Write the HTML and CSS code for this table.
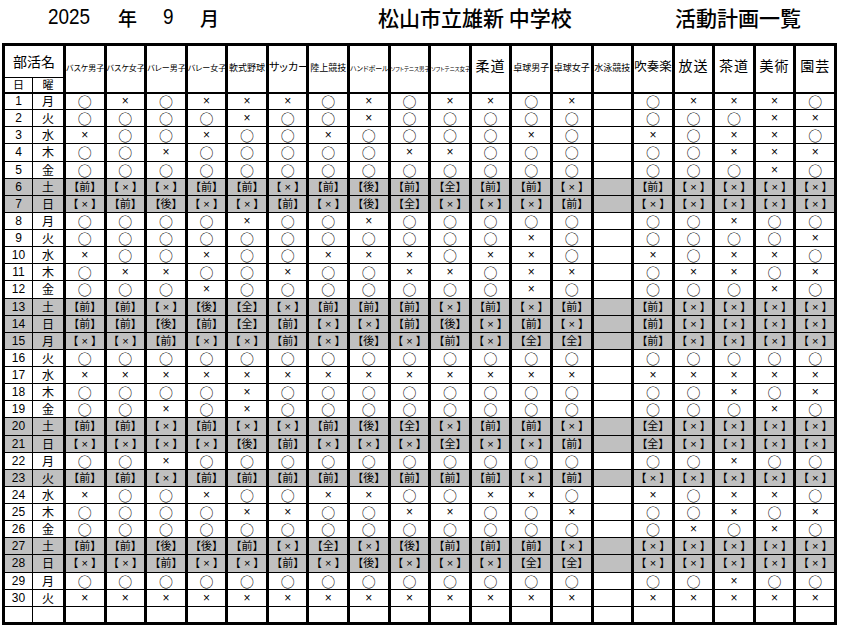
FILE: index.html
```html
<!DOCTYPE html>
<html lang="ja">
<head>
<meta charset="utf-8">
<title>活動計画一覧</title>
<link rel="stylesheet" href="styles.css">
</head>
<body>
<div class="title">
  <span class="t-year"><span class="num">2025</span></span>
  <span class="t-nen">年</span>
  <span class="t-m"><span class="num">9</span></span>
  <span class="t-tsuki">月</span>
  <span class="t-school">松山市立雄新 中学校</span>
  <span class="t-doc">活動計画一覧</span>
</div>
<table class="plan">
<colgroup><col class="cd"><col class="cw"><col span="19"></colgroup>
<thead>
<tr class="h1">
  <th colspan="2" class="bk">部活名</th>
  <th rowspan="2"><span class="l s8">バスケ男子</span></th>
  <th rowspan="2"><span class="l s8">バスケ女子</span></th>
  <th rowspan="2"><span class="l s8">バレー男子</span></th>
  <th rowspan="2"><span class="l s8">バレー女子</span></th>
  <th rowspan="2"><span class="l s9">軟式野球</span></th>
  <th rowspan="2"><span class="l s11">サッカー</span></th>
  <th rowspan="2"><span class="l s9">陸上競技</span></th>
  <th rowspan="2"><span class="l s7">ハンドボール</span></th>
  <th rowspan="2"><span class="l s5">ソフトテニス男子</span></th>
  <th rowspan="2"><span class="l s5">ソフトテニス女子</span></th>
  <th rowspan="2"><span class="l s14">柔道</span></th>
  <th rowspan="2"><span class="l s9">卓球男子</span></th>
  <th rowspan="2"><span class="l s9">卓球女子</span></th>
  <th rowspan="2"><span class="l s9">水泳競技</span></th>
  <th rowspan="2"><span class="l s12">吹奏楽</span></th>
  <th rowspan="2"><span class="l s14">放送</span></th>
  <th rowspan="2"><span class="l s14">茶道</span></th>
  <th rowspan="2"><span class="l s14">美術</span></th>
  <th rowspan="2"><span class="l s14">園芸</span></th>
</tr>
<tr class="h2"><th class="d">日</th><th class="w">曜</th></tr>
</thead>
<tbody>
<tr><td class="d">1</td><td class="w">月</td><td>○</td><td class="x">×</td><td>○</td><td class="x">×</td><td class="x">×</td><td class="x">×</td><td>○</td><td class="x">×</td><td>○</td><td class="x">×</td><td class="x">×</td><td>○</td><td class="x">×</td><td></td><td>○</td><td class="x">×</td><td class="x">×</td><td class="x">×</td><td>○</td></tr>
<tr><td class="d">2</td><td class="w">火</td><td>○</td><td>○</td><td>○</td><td>○</td><td class="x">×</td><td>○</td><td>○</td><td class="x">×</td><td>○</td><td>○</td><td>○</td><td>○</td><td>○</td><td></td><td>○</td><td>○</td><td>○</td><td class="x">×</td><td class="x">×</td></tr>
<tr><td class="d">3</td><td class="w">水</td><td class="x">×</td><td>○</td><td>○</td><td class="x">×</td><td>○</td><td>○</td><td class="x">×</td><td>○</td><td>○</td><td>○</td><td>○</td><td class="x">×</td><td>○</td><td></td><td class="x">×</td><td>○</td><td class="x">×</td><td class="x">×</td><td>○</td></tr>
<tr><td class="d">4</td><td class="w">木</td><td>○</td><td>○</td><td class="x">×</td><td>○</td><td>○</td><td>○</td><td>○</td><td>○</td><td class="x">×</td><td class="x">×</td><td>○</td><td>○</td><td>○</td><td></td><td>○</td><td>○</td><td class="x">×</td><td class="x">×</td><td class="x">×</td></tr>
<tr><td class="d">5</td><td class="w">金</td><td>○</td><td>○</td><td>○</td><td>○</td><td>○</td><td>○</td><td>○</td><td>○</td><td>○</td><td>○</td><td>○</td><td>○</td><td>○</td><td></td><td>○</td><td>○</td><td>○</td><td class="x">×</td><td>○</td></tr>
<tr class="we"><td class="d">6</td><td class="w">土</td><td>【前】</td><td>【 × 】</td><td>【 × 】</td><td>【前】</td><td>【前】</td><td>【 × 】</td><td>【前】</td><td>【後】</td><td>【前】</td><td>【全】</td><td>【前】</td><td>【前】</td><td>【 × 】</td><td></td><td>【前】</td><td>【 × 】</td><td>【 × 】</td><td>【 × 】</td><td>【 × 】</td></tr>
<tr class="we"><td class="d">7</td><td class="w">日</td><td>【 × 】</td><td>【前】</td><td>【後】</td><td>【 × 】</td><td>【 × 】</td><td>【前】</td><td>【 × 】</td><td>【後】</td><td>【全】</td><td>【 × 】</td><td>【 × 】</td><td>【 × 】</td><td>【前】</td><td></td><td>【 × 】</td><td>【 × 】</td><td>【 × 】</td><td>【 × 】</td><td>【 × 】</td></tr>
<tr><td class="d">8</td><td class="w">月</td><td>○</td><td>○</td><td>○</td><td>○</td><td class="x">×</td><td>○</td><td>○</td><td class="x">×</td><td>○</td><td>○</td><td>○</td><td>○</td><td>○</td><td></td><td>○</td><td>○</td><td class="x">×</td><td>○</td><td>○</td></tr>
<tr><td class="d">9</td><td class="w">火</td><td>○</td><td>○</td><td>○</td><td>○</td><td>○</td><td>○</td><td>○</td><td>○</td><td>○</td><td>○</td><td>○</td><td class="x">×</td><td>○</td><td></td><td>○</td><td>○</td><td>○</td><td>○</td><td class="x">×</td></tr>
<tr><td class="d">10</td><td class="w">水</td><td class="x">×</td><td>○</td><td>○</td><td class="x">×</td><td>○</td><td>○</td><td class="x">×</td><td class="x">×</td><td class="x">×</td><td>○</td><td class="x">×</td><td class="x">×</td><td>○</td><td></td><td class="x">×</td><td>○</td><td class="x">×</td><td class="x">×</td><td>○</td></tr>
<tr><td class="d">11</td><td class="w">木</td><td>○</td><td class="x">×</td><td class="x">×</td><td>○</td><td>○</td><td class="x">×</td><td>○</td><td>○</td><td class="x">×</td><td class="x">×</td><td>○</td><td class="x">×</td><td class="x">×</td><td></td><td>○</td><td class="x">×</td><td class="x">×</td><td>○</td><td class="x">×</td></tr>
<tr><td class="d">12</td><td class="w">金</td><td>○</td><td>○</td><td>○</td><td class="x">×</td><td>○</td><td>○</td><td>○</td><td>○</td><td>○</td><td>○</td><td>○</td><td class="x">×</td><td>○</td><td></td><td>○</td><td>○</td><td>○</td><td class="x">×</td><td>○</td></tr>
<tr class="we"><td class="d">13</td><td class="w">土</td><td>【前】</td><td>【前】</td><td>【 × 】</td><td>【後】</td><td>【全】</td><td>【 × 】</td><td>【前】</td><td>【前】</td><td>【前】</td><td>【 × 】</td><td>【前】</td><td>【 × 】</td><td>【前】</td><td></td><td>【前】</td><td>【 × 】</td><td>【 × 】</td><td>【 × 】</td><td>【 × 】</td></tr>
<tr class="we"><td class="d">14</td><td class="w">日</td><td>【前】</td><td>【前】</td><td>【後】</td><td>【前】</td><td>【全】</td><td>【前】</td><td>【 × 】</td><td>【 × 】</td><td>【前】</td><td>【後】</td><td>【 × 】</td><td>【前】</td><td>【 × 】</td><td></td><td>【前】</td><td>【 × 】</td><td>【 × 】</td><td>【 × 】</td><td>【 × 】</td></tr>
<tr class="we"><td class="d">15</td><td class="w">月</td><td>【 × 】</td><td>【 × 】</td><td>【前】</td><td>【 × 】</td><td>【 × 】</td><td>【前】</td><td>【 × 】</td><td>【後】</td><td>【 × 】</td><td>【前】</td><td>【 × 】</td><td>【全】</td><td>【全】</td><td></td><td>【前】</td><td>【 × 】</td><td>【 × 】</td><td>【 × 】</td><td>【 × 】</td></tr>
<tr><td class="d">16</td><td class="w">火</td><td>○</td><td>○</td><td>○</td><td>○</td><td>○</td><td>○</td><td>○</td><td>○</td><td>○</td><td>○</td><td>○</td><td>○</td><td>○</td><td></td><td>○</td><td>○</td><td>○</td><td>○</td><td>○</td></tr>
<tr><td class="d">17</td><td class="w">水</td><td class="x">×</td><td class="x">×</td><td class="x">×</td><td class="x">×</td><td class="x">×</td><td class="x">×</td><td class="x">×</td><td class="x">×</td><td class="x">×</td><td class="x">×</td><td class="x">×</td><td class="x">×</td><td class="x">×</td><td></td><td class="x">×</td><td class="x">×</td><td class="x">×</td><td class="x">×</td><td class="x">×</td></tr>
<tr><td class="d">18</td><td class="w">木</td><td>○</td><td>○</td><td>○</td><td>○</td><td class="x">×</td><td>○</td><td>○</td><td>○</td><td>○</td><td>○</td><td>○</td><td>○</td><td>○</td><td></td><td>○</td><td>○</td><td class="x">×</td><td>○</td><td class="x">×</td></tr>
<tr><td class="d">19</td><td class="w">金</td><td>○</td><td>○</td><td class="x">×</td><td>○</td><td class="x">×</td><td>○</td><td>○</td><td>○</td><td>○</td><td>○</td><td>○</td><td>○</td><td>○</td><td></td><td>○</td><td>○</td><td>○</td><td class="x">×</td><td>○</td></tr>
<tr class="we"><td class="d">20</td><td class="w">土</td><td>【前】</td><td>【前】</td><td>【 × 】</td><td>【前】</td><td>【 × 】</td><td>【 × 】</td><td>【前】</td><td>【後】</td><td>【全】</td><td>【 × 】</td><td>【前】</td><td>【前】</td><td>【 × 】</td><td></td><td>【全】</td><td>【 × 】</td><td>【 × 】</td><td>【 × 】</td><td>【 × 】</td></tr>
<tr class="we"><td class="d">21</td><td class="w">日</td><td>【 × 】</td><td>【 × 】</td><td>【 × 】</td><td>【 × 】</td><td>【後】</td><td>【前】</td><td>【 × 】</td><td>【 × 】</td><td>【 × 】</td><td>【全】</td><td>【 × 】</td><td>【 × 】</td><td>【前】</td><td></td><td>【全】</td><td>【 × 】</td><td>【 × 】</td><td>【 × 】</td><td>【 × 】</td></tr>
<tr><td class="d">22</td><td class="w">月</td><td>○</td><td>○</td><td class="x">×</td><td>○</td><td>○</td><td>○</td><td>○</td><td>○</td><td>○</td><td>○</td><td>○</td><td>○</td><td>○</td><td></td><td>○</td><td>○</td><td class="x">×</td><td>○</td><td>○</td></tr>
<tr class="we"><td class="d">23</td><td class="w">火</td><td>【前】</td><td>【前】</td><td>【 × 】</td><td>【前】</td><td>【前】</td><td>【前】</td><td>【前】</td><td>【後】</td><td>【前】</td><td>【前】</td><td>【前】</td><td>【 × 】</td><td>【前】</td><td></td><td>【 × 】</td><td>【 × 】</td><td>【 × 】</td><td>【 × 】</td><td>【 × 】</td></tr>
<tr><td class="d">24</td><td class="w">水</td><td class="x">×</td><td>○</td><td>○</td><td class="x">×</td><td>○</td><td>○</td><td class="x">×</td><td class="x">×</td><td>○</td><td>○</td><td class="x">×</td><td class="x">×</td><td>○</td><td></td><td class="x">×</td><td>○</td><td class="x">×</td><td class="x">×</td><td>○</td></tr>
<tr><td class="d">25</td><td class="w">木</td><td>○</td><td>○</td><td>○</td><td>○</td><td class="x">×</td><td class="x">×</td><td>○</td><td>○</td><td class="x">×</td><td class="x">×</td><td>○</td><td>○</td><td class="x">×</td><td></td><td>○</td><td>○</td><td class="x">×</td><td>○</td><td class="x">×</td></tr>
<tr><td class="d">26</td><td class="w">金</td><td>○</td><td>○</td><td>○</td><td>○</td><td>○</td><td>○</td><td>○</td><td>○</td><td>○</td><td>○</td><td>○</td><td>○</td><td>○</td><td></td><td>○</td><td class="x">×</td><td>○</td><td class="x">×</td><td>○</td></tr>
<tr class="we"><td class="d">27</td><td class="w">土</td><td>【前】</td><td>【前】</td><td>【後】</td><td>【後】</td><td>【前】</td><td>【 × 】</td><td>【全】</td><td>【 × 】</td><td>【後】</td><td>【前】</td><td>【前】</td><td>【前】</td><td>【 × 】</td><td></td><td>【 × 】</td><td>【 × 】</td><td>【 × 】</td><td>【 × 】</td><td>【 × 】</td></tr>
<tr class="we"><td class="d">28</td><td class="w">日</td><td>【 × 】</td><td>【 × 】</td><td>【前】</td><td>【 × 】</td><td>【 × 】</td><td>【前】</td><td>【 × 】</td><td>【後】</td><td>【 × 】</td><td>【 × 】</td><td>【 × 】</td><td>【全】</td><td>【全】</td><td></td><td>【 × 】</td><td>【 × 】</td><td>【 × 】</td><td>【 × 】</td><td>【 × 】</td></tr>
<tr><td class="d">29</td><td class="w">月</td><td>○</td><td>○</td><td>○</td><td>○</td><td>○</td><td>○</td><td>○</td><td>○</td><td>○</td><td>○</td><td>○</td><td>○</td><td>○</td><td></td><td>○</td><td>○</td><td class="x">×</td><td>○</td><td>○</td></tr>
<tr><td class="d">30</td><td class="w">火</td><td class="x">×</td><td class="x">×</td><td class="x">×</td><td class="x">×</td><td class="x">×</td><td class="x">×</td><td class="x">×</td><td class="x">×</td><td class="x">×</td><td class="x">×</td><td class="x">×</td><td class="x">×</td><td class="x">×</td><td></td><td class="x">×</td><td class="x">×</td><td class="x">×</td><td class="x">×</td><td class="x">×</td></tr>
<tr><td class="d"></td><td class="w"></td><td></td><td></td><td></td><td></td><td></td><td></td><td></td><td></td><td></td><td></td><td></td><td></td><td></td><td></td><td></td><td></td><td></td><td></td><td></td></tr>
</tbody>
</table>
</body>
</html>
```

FILE: styles.css
```css
html, body {
  margin: 0;
  padding: 0;
  background: #fff;
}

body {
  width: 848px;
  height: 642px;
  overflow: hidden;
  color: #000;
  font-family: "Noto Sans CJK JP", "Liberation Sans", sans-serif;
}

/* ---------- title line ---------- */
.title {
  display: flex;
  align-items: center;
  height: 34px;
  white-space: nowrap;
  font-weight: 500;
}

.num {
  display: inline-block;
  font-family: "Liberation Sans", sans-serif;
  font-size: 22px;
  transform: scaleX(0.86);
  transform-origin: left center;
}

.t-year { margin-left: 48px; width: 70px; }
.t-nen { width: 45px; font-size: 19px; }
.t-m { width: 37px; }
.t-tsuki { width: 178px; font-size: 19px; }
.t-school { width: 297px; font-size: 21px; }
.t-doc { font-size: 21px; }

/* ---------- table ---------- */
.plan {
  margin: 9px 0 0 2px;
  width: 835px;
  border-collapse: collapse;
  table-layout: fixed;
  border: 3px solid #000;
}

.cd { width: 29px; }
.cw { width: 32px; }

.plan th,
.plan td {
  padding: 0;
  border-top: 1px solid #000;
  border-bottom: 1px solid #000;
  border-left: 3px solid #000;
  border-right: 3px solid #000;
  text-align: center;
  vertical-align: middle;
  white-space: nowrap;
  font-weight: normal;
}

.plan .d { border-right-width: 1px; }
.plan .w { border-left-width: 1px; }

.h1 { height: 33px; }
.h2 { height: 15px; }

.plan thead th {
  border-bottom-width: 2px;
  overflow: hidden;
}
.plan .h1 th { padding-bottom: 10px; }
.plan .h1 th.bk {
  border-bottom-width: 1px;
  padding: 0 0 2px;
  font-size: 14px;
}
.plan .h2 th {
  font-size: 11px;
  line-height: 13px;
}

.l {
  display: inline-block;
  font-feature-settings: "palt";
  line-height: 1;
}
.s5 { font-size: 5.5px; }
.s7 { font-size: 7px; }
.s8 { font-size: 8px; }
.s9 { font-size: 9px; }
.s11 { font-size: 11px; }
.s12 { font-size: 12.5px; }
.s14 { font-size: 14px; letter-spacing: 1px; }

.plan tbody tr { height: 17.13px; }

.plan tbody td {
  font-size: 14px;
  line-height: 12px;
}

.plan tbody td.x {
  font-family: "Liberation Sans", sans-serif;
  font-size: 12px;
}

.plan tbody td.d {
  font-family: "Liberation Sans", sans-serif;
  font-size: 12px;
}
.plan tbody td.w {
  font-size: 12px;
}

.plan tr.we td {
  background: #c0c0c0;
  font-family: "Liberation Sans", "Noto Sans CJK JP", sans-serif;
  font-size: 11px;
}
.plan tr.we td.d { font-size: 12px; }
.plan tr.we td.w {
  font-family: "Noto Sans CJK JP", sans-serif;
  font-size: 12px;
}
```
